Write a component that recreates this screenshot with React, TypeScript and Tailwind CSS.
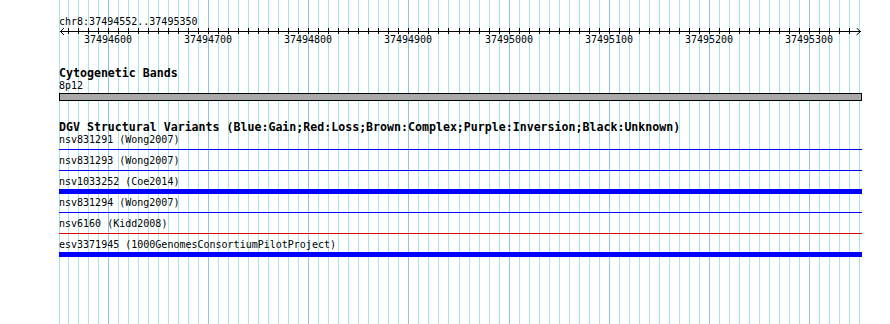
const START = 37494552;
const END = 37495350;
const PX_PER_BP = 1.00143;
const ORIGIN = 108; // x of 37494600

type Variant = {
  id: string;
  study: string;
  glyph: "line" | "bar";
  color: string;
};

const variants: Variant[] = [
  { id: "nsv831291", study: "Wong2007", glyph: "line", color: "bg-[#0000ff]" },
  { id: "nsv831293", study: "Wong2007", glyph: "line", color: "bg-[#0000ff]" },
  { id: "nsv1033252", study: "Coe2014", glyph: "bar", color: "bg-[#0000ff]" },
  { id: "nsv831294", study: "Wong2007", glyph: "line", color: "bg-[#0000ff]" },
  { id: "nsv6160", study: "Kidd2008", glyph: "line", color: "bg-[#e00000]" },
  { id: "esv3371945", study: "1000GenomesConsortiumPilotProject", glyph: "bar", color: "bg-[#0000ff]" },
];

// one grid line every 10 bp
const gridLines = Array.from({ length: 80 }, (_, i) => {
  const k = i - 4;
  return { x: Math.round(ORIGIN + k * 10 * PX_PER_BP), major: k % 10 === 0, k };
});

const majorLabels = gridLines
  .filter((g) => g.major)
  .map((g) => ({ x: g.x, label: String(37494600 + g.k * 10) }));

function Grid() {
  return (
    <svg className="absolute inset-0" width={890} height={324}>
      <rect x={59} y={0} width={1} height={324} fill="#a8e6ee" />
      {gridLines.map((g) => (
        <rect key={g.x} x={g.x} y={0} width={1} height={324} fill={g.major ? "#8cc4ea" : "#a8e6ee"} />
      ))}
    </svg>
  );
}

function Ruler() {
  const off = 59;
  return (
    <svg width={803} height={20} className="block">
      <rect x={60 - off} y={3} width={801} height={1} fill="#000" />
      <polyline points={`${64 - off},0 ${60.5 - off},3.5 ${64 - off},7`} fill="none" stroke="#000" strokeWidth={1} />
      <polyline points={`${856.5 - off},0 ${860.5 - off},3.5 ${856.5 - off},7`} fill="none" stroke="#000" strokeWidth={1} />
      {gridLines
        .filter((g) => g.x < 858)
        .map((g) => (
          <rect key={g.x} x={g.x - off} y={0} width={1} height={6} fill="#000" />
        ))}
      {majorLabels.map((m) => (
        <text
          key={m.label}
          x={m.x - off}
          y={15}
          textAnchor="middle"
          fontFamily="DejaVu Sans Mono, monospace"
          fontSize={10}
          fill="#000"
        >
          {m.label}
        </text>
      ))}
    </svg>
  );
}

export default function App() {
  return (
    <div className="relative w-[890px] h-[324px] overflow-hidden bg-white text-black font-['DejaVu_Sans_Mono',monospace]">
      <Grid />
      <div className="relative ml-[59px] w-[803px] pt-[16px]">
        <div className="h-[12px] text-[10px] leading-[12px] whitespace-pre">
          chr8:{START}..{END}
        </div>
        <Ruler />

        <div className="mt-[19px] h-[13px] text-[11.6px] leading-[13px] font-bold whitespace-pre">Cytogenetic Bands</div>
        <div className="h-[12px] text-[10px] leading-[12px]">8p12</div>
        <div className="mt-px h-[8px] border border-black bg-[#a9a9a9]" />

        <div className="mt-[20px] h-[13px] text-[11.6px] leading-[13px] font-bold whitespace-pre">
          DGV Structural Variants (Blue:Gain;Red:Loss;Brown:Complex;Purple:Inversion;Black:Unknown)
        </div>
        {variants.map((v) => (
          <div key={v.id} className="h-[21px]">
            <div className="h-[12px] text-[10px] leading-[12px] whitespace-pre">
              {v.id} ({v.study})
            </div>
            {v.glyph === "line" ? (
              <div className={`mt-[3px] h-px ${v.color}`} />
            ) : (
              <div className={`mt-px h-[5px] ${v.color}`} />
            )}
          </div>
        ))}
      </div>
    </div>
  );
}
